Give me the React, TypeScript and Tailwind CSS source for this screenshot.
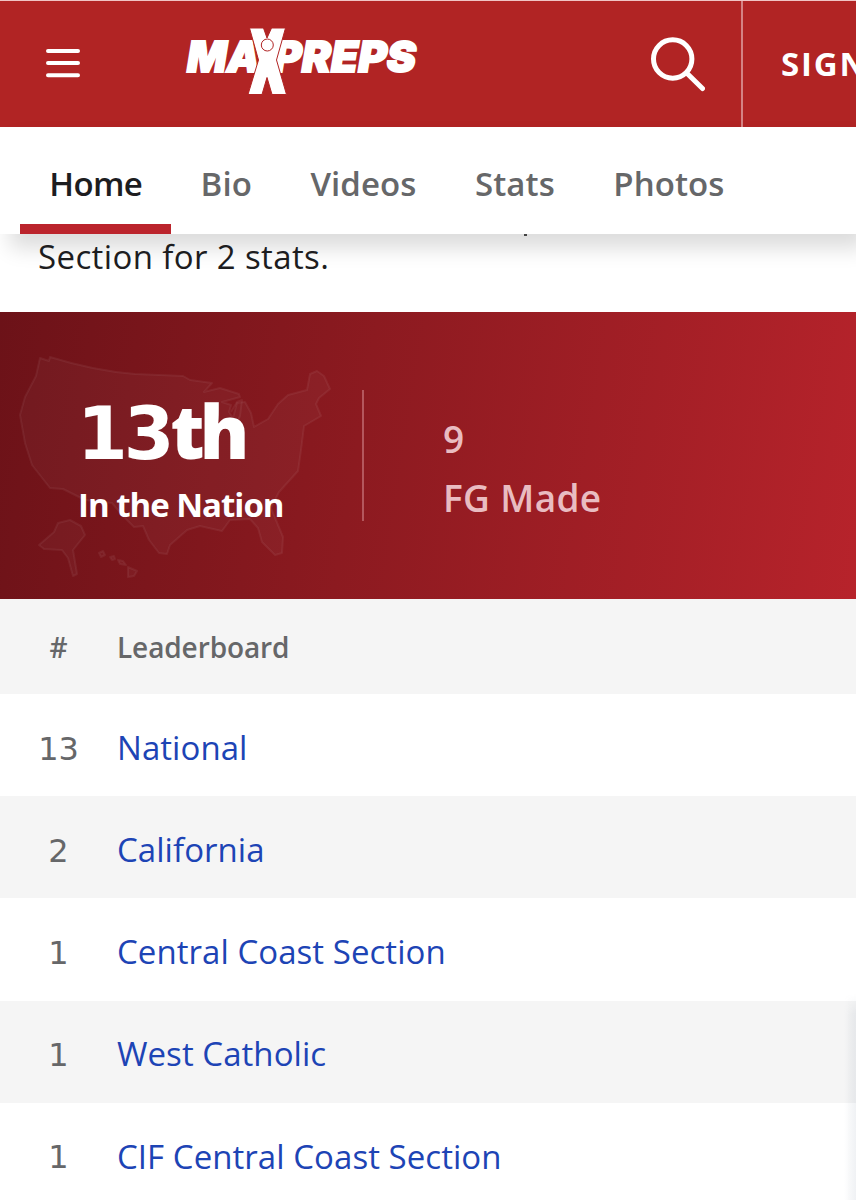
import React from 'react';

interface LeaderRow {
  rank: number;
  name: string;
}

const tabs = ['Home', 'Bio', 'Videos', 'Stats', 'Photos'];

const rows: LeaderRow[] = [
  { rank: 13, name: 'National' },
  { rank: 2, name: 'California' },
  { rank: 1, name: 'Central Coast Section' },
  { rank: 1, name: 'West Catholic' },
  { rank: 1, name: 'CIF Central Coast Section' },
];

const Logo: React.FC = () => (
  <svg width="236" height="72" viewBox="184 26 236 72" className="block">
    <g fill="#fff" stroke="#fff" strokeWidth="1.8" fontFamily="Inter, 'Liberation Sans', sans-serif" fontWeight="900" fontStyle="italic" fontSize="42">
      <text x="187" y="71.5" textLength="73" lengthAdjust="spacingAndGlyphs">MA</text>
      <text x="273" y="71.5" textLength="143" lengthAdjust="spacingAndGlyphs">PREPS</text>
    </g>
    {/* athlete with raised arms */}
    <path
      d="M249.5 28H263.5L267 38L271.5 28H285.5L276.5 60L286.5 94.5H272L267 77.5L262 94.5H248L258.5 60Z"
      fill="#fff"
      stroke="#b12424"
      strokeWidth="1"
    />
    <circle cx="267.3" cy="45" r="6" fill="#fff" stroke="#b12424" strokeWidth="1" />
  </svg>
);

const Header: React.FC = () => (
  <header className="flex h-[127px] items-stretch border-t border-[#f0c4c4] bg-[#b12424]">
    <div className="flex w-[184px] items-center pb-[2px] pl-[46px]">
      <svg width="34" height="30" viewBox="0 0 34 30" stroke="#fff" strokeWidth="4" strokeLinecap="round">
        <path d="M2 3H32M2 15H32M2 27.2H32" />
      </svg>
    </div>
    <div className="pt-[25px]">
      <Logo />
    </div>
    <div className="flex flex-1 items-start justify-end pt-9 pr-9">
      <svg width="56" height="56" viewBox="0 0 56 56" fill="none" stroke="#fff" strokeWidth="5" strokeLinecap="round">
        <circle cx="23.7" cy="22" r="19.2" />
        <path d="M38.2 36.5L53.5 51.5" />
      </svg>
    </div>
    <div className="w-[115px] overflow-hidden border-l-2 border-[#d58384] pt-[40px] pl-[38px] text-[33px] leading-[46px] font-bold tracking-[1.8px] whitespace-nowrap text-white">
      SIGN
    </div>
  </header>
);

const Tabs: React.FC = () => (
  <nav className="relative z-10 flex h-[107px] bg-white pl-5 shadow-[10px_14px_20px_rgba(0,0,0,0.14)]">
    {tabs.map((tab, i) => (
      <div
        key={tab}
        className={`h-[107px] px-[29.2px] pt-[34px] text-[33px] leading-[46px] font-semibold ${
          i === 0 ? 'border-b-[10px] border-[#bb242c] tracking-[-0.6px] text-[#1d1d1f]' : 'tracking-[0.1px] text-[#666769]'
        }`}
      >
        {tab}
      </div>
    ))}
  </nav>
);

const NationMap: React.FC = () => (
  <svg
    width="330"
    height="240"
    viewBox="10 350 330 240"
    fill="#fff"
    fillOpacity="0.03"
    stroke="#fff"
    strokeOpacity="0.06"
    strokeWidth="2"
    strokeLinejoin="round"
    className="absolute top-[38px] left-[10px]"
  >
    <path d="M40 358L49 361L50 357Q95 371 135 374L183 376L190 380L212 383L204 392L220 388L239 394L240 397L222 402L231 405L229 412L233 418L237 403L245 402L251 413L254 427L268 419L278 404L288 395L307 390L310 374L317 371L324 376L330 389L319 398L316 404L321 416L304 426L301 450L298 471L279 492L271 508L283 537L282 553L275 555L262 542L258 528L250 519L230 520L222 531L200 526L187 530L170 545L167 554L159 553L149 540L143 526L134 527L122 515L112 503L85 500L63 489L50 488L32 465L25 443L20 415L25 397L36 376Z" />
    <path d="M231 412L237 402L242 400L240 416L236 424" fill="none" />
    <path d="M39 545L54 532L58 523L70 520L81 526L85 535L73 550L77 574L73 576L68 558L62 550L44 549Z" />
    <path d="M99 553L103 551L105 555L101 557ZM110 557L114 556L115 559L112 560ZM118 560L123 561L126 565L120 564ZM128 567L137 571L134 576L128 577Z" />
  </svg>
);

const RankBanner: React.FC = () => (
  <section className="relative flex h-[287px] items-start bg-[linear-gradient(99deg,#6c1218_0%,#8c1a20_42%,#b7232b_100%)] text-white">
    <NationMap />
    <div className="relative w-[362px] pt-[72px] pl-[77px]">
      <div className="flex h-[101px] items-baseline text-[74px] leading-[94px] font-extrabold">
        <span className="font-['DejaVu_Sans',sans-serif] text-[73px] font-bold tracking-[-4px]">13</span>
        <span className="tracking-[-5px]">th</span>
      </div>
      <div className="-mt-[3px] pl-px text-[33px] leading-[46px] font-bold tracking-[-1px]">In the Nation</div>
    </div>
    <div className="mt-[78px] h-[131px] w-0.5 bg-[#b4575d]" />
    <div className="pt-[102px] pl-[79px] text-[37px] leading-[50px] font-semibold tracking-[0.35px] text-[#e9bcc1]">
      <div>9</div>
      <div className="mt-[9px]">FG Made</div>
    </div>
  </section>
);

const Leaderboard: React.FC = () => (
  <section className="relative">
    <div className="flex h-[95px] items-center bg-[#f5f5f5] pt-px text-[28px] font-semibold text-[#666769]">
      <div className="w-[117px] text-center">#</div>
      <div className="tracking-[-0.1px]">Leaderboard</div>
    </div>
    {rows.map((row) => (
      <div key={row.name} className="flex h-[102.2px] items-center bg-white pt-[5px] text-[33px] nth-[2n+3]:bg-[#f5f5f5]">
        <div className="w-[117px] pt-0.5 text-center font-['DejaVu_Sans',sans-serif] text-[32px] text-[#666769]">{row.rank}</div>
        <div className="tracking-[0.05px] text-[#1d44b5]">{row.name}</div>
      </div>
    ))}
    <div className="absolute top-[395px] right-0 bottom-0 w-3 bg-linear-to-r from-transparent to-slate-500/10 mask-t-from-90%" />
  </section>
);

const App: React.FC = () => {
  return (
    <div className="h-[1200px] w-[856px] overflow-hidden bg-white font-['Open_Sans','Noto_Sans',sans-serif]">
      <Header />
      <Tabs />
      <div className="relative h-[78px] pl-[38px] text-[33px] leading-[45px] tracking-[0.38px] text-[#1d1d1f]">
        <span className="relative z-20">Section for 2 stats.</span>
        {/* descender of the line scrolled under the tabs */}
        <span className="absolute top-0 left-[524px] z-20 h-[2px] w-[3px] bg-[#444]" />
      </div>
      <RankBanner />
      <Leaderboard />
    </div>
  );
};

export default App;
